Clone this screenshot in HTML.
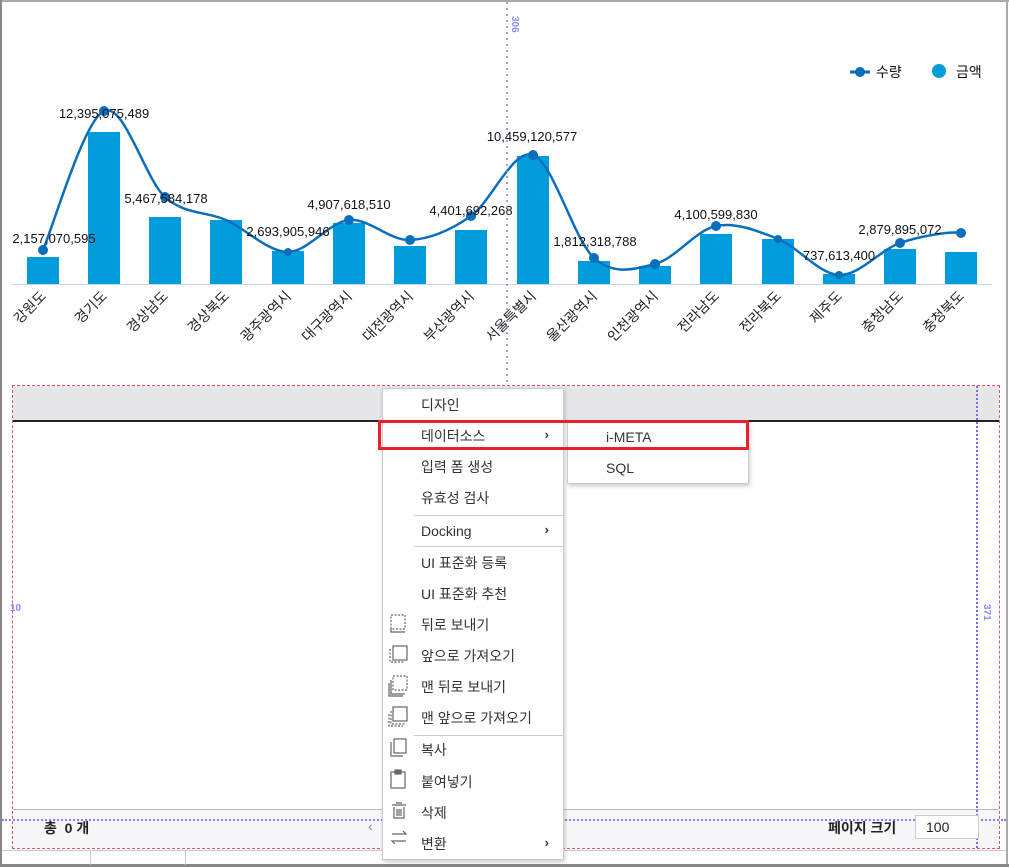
<!DOCTYPE html>
<html><head><meta charset="utf-8"><style>
*{margin:0;padding:0;box-sizing:border-box}
body{width:1009px;height:867px;background:#fff;position:relative;overflow:hidden;font-family:"Liberation Sans","Noto Sans CJK KR",sans-serif;color:#222}
.abs{position:absolute}
.menu{position:absolute;left:382px;top:388px;width:182px;height:472px;background:#fff;border:1px solid #ccc;box-shadow:1px 2px 4px rgba(0,0,0,.2)}
.mi{position:absolute;left:38px;font-size:14px;color:#333;line-height:18px}
.sep{position:absolute;left:31px;right:0;height:1px;background:#ccc}
.arr{position:absolute;right:14px;font-size:13px;font-weight:bold;color:#333}
</style></head><body>
<div class="abs" style="left:0;top:0;width:1009px;height:2px;background:#aaa"></div>
<div class="abs" style="left:0;top:0;width:2px;height:867px;background:#888"></div>
<div class="abs" style="left:1006px;top:0;width:2px;height:867px;background:#aaa"></div>
<div class="abs" style="left:0;top:864px;width:1009px;height:3px;background:#888"></div>

<svg class="abs" style="left:0;top:0" width="1009" height="384">
<g fill="#009cdc">
<rect x="27" y="257" width="32" height="27"/><rect x="88" y="132" width="32" height="152"/>
<rect x="149" y="217" width="32" height="67"/><rect x="210" y="220" width="32" height="64"/>
<rect x="272" y="251" width="32" height="33"/><rect x="333" y="223" width="32" height="61"/>
<rect x="394" y="246" width="32" height="38"/><rect x="455" y="230" width="32" height="54"/>
<rect x="517" y="156" width="32" height="128"/><rect x="578" y="261" width="32" height="23"/>
<rect x="639" y="266" width="32" height="18"/><rect x="700" y="234" width="32" height="50"/>
<rect x="762" y="239" width="32" height="45"/><rect x="823" y="274" width="32" height="10"/>
<rect x="884" y="249" width="32" height="35"/><rect x="945" y="252" width="32" height="32"/>
</g>
<line x1="12" y1="284.5" x2="992" y2="284.5" stroke="#c8d4ea" stroke-width="1"/>
<path d="M43,250 C53,227 84,120 104,111 C124,102 145,179 165,197 C185,215 206,211 226,220 C246,229 268,252 288,252 C308,252 329,222 349,220 C369,218 390,241 410,240 C430,239 451,230 471,216 C491,202 513,148 533,155 C553,162 574,240 594,258 C614,276 635,269 655,264 C675,259 696,230 716,226 C736,222 758,231 778,239 C798,247 819,274 839,275 C859,276 880,250 900,243 C920,236 951,231 961,233" fill="none" stroke="#0a6ebd" stroke-width="2.5"/>
<g fill="#0a6ebd">
<circle cx="43" cy="250" r="5"/><circle cx="104" cy="111" r="5"/><circle cx="165" cy="197" r="5"/><circle cx="288" cy="252" r="4"/><circle cx="349" cy="220" r="5"/><circle cx="410" cy="240" r="5"/><circle cx="471" cy="216" r="5"/><circle cx="533" cy="155" r="5"/><circle cx="594" cy="258" r="5"/><circle cx="655" cy="264" r="5"/><circle cx="716" cy="226" r="5"/><circle cx="778" cy="239" r="4"/><circle cx="839" cy="275" r="4"/><circle cx="900" cy="243" r="5"/><circle cx="961" cy="233" r="5"/>
</g>
<g font-family="Liberation Sans,Noto Sans CJK KR,sans-serif" font-size="13" fill="#111" text-anchor="middle">
<text x="54" y="243">2,157,070,595</text><text x="104" y="118">12,395,075,489</text>
<text x="166" y="203">5,467,584,178</text><text x="288" y="236">2,693,905,946</text>
<text x="349" y="209">4,907,618,510</text><text x="471" y="215">4,401,692,268</text>
<text x="532" y="141">10,459,120,577</text><text x="595" y="246">1,812,318,788</text>
<text x="716" y="219">4,100,599,830</text><text x="839" y="260">737,613,400</text>
<text x="900" y="234">2,879,895,072</text>
</g>
<g font-family="Liberation Sans,Noto Sans CJK KR,sans-serif" font-size="14" fill="#222" text-anchor="end">
<text transform="translate(47,297) rotate(-45)">강원도</text>
<text transform="translate(108,297) rotate(-45)">경기도</text>
<text transform="translate(169,297) rotate(-45)">경상남도</text>
<text transform="translate(230,297) rotate(-45)">경상북도</text>
<text transform="translate(292,297) rotate(-45)">광주광역시</text>
<text transform="translate(353,297) rotate(-45)">대구광역시</text>
<text transform="translate(414,297) rotate(-45)">대전광역시</text>
<text transform="translate(475,297) rotate(-45)">부산광역시</text>
<text transform="translate(537,297) rotate(-45)">서울특별시</text>
<text transform="translate(598,297) rotate(-45)">울산광역시</text>
<text transform="translate(659,297) rotate(-45)">인천광역시</text>
<text transform="translate(720,297) rotate(-45)">전라남도</text>
<text transform="translate(782,297) rotate(-45)">전라북도</text>
<text transform="translate(843,297) rotate(-45)">제주도</text>
<text transform="translate(904,297) rotate(-45)">충청남도</text>
<text transform="translate(965,297) rotate(-45)">충청북도</text>
</g>
<line x1="850" y1="72" x2="870" y2="72" stroke="#0a6ebd" stroke-width="3"/><circle cx="860" cy="72" r="5" fill="#0a6ebd"/>
<text x="876" y="77" font-size="14" fill="#111" font-family="Liberation Sans,Noto Sans CJK KR,sans-serif">수량</text>
<circle cx="939" cy="71" r="7" fill="#009cdc"/>
<text x="956" y="77" font-size="14" fill="#111" font-family="Liberation Sans,Noto Sans CJK KR,sans-serif">금액</text>
<line x1="507" y1="2" x2="507" y2="384" stroke="#7b7bf5" stroke-width="1.5" stroke-dasharray="2,4"/>
<text transform="translate(512,16) rotate(90)" font-size="10" font-weight="bold" fill="#8a8af5" font-family="Liberation Sans,sans-serif">306</text>
</svg>

<div class="abs" style="left:13px;top:386px;width:986px;height:35px;background:#e6e5ea"></div>
<div class="abs" style="left:13px;top:420px;width:986px;height:2px;background:#222"></div>
<div class="abs" style="left:13px;top:809px;width:986px;height:39px;background:#f7f7fa;border-top:1px solid #bbb"></div>
<div class="abs" style="left:12px;top:385px;width:988px;height:464px;border:1px dashed #e8545a"></div>
<div class="abs" style="left:976px;top:386px;width:0;height:462px;border-left:2px dotted #6f6ff5"></div>
<div class="abs" style="left:2px;top:819px;width:1004px;height:0;border-top:2px dotted #8080f5"></div>
<div class="abs" style="left:10px;top:603px;font-size:10px;font-weight:bold;color:#8a8af5">10</div>
<div class="abs" style="top:604px;font-size:10px;font-weight:bold;color:#8a8af5;transform:rotate(90deg);transform-origin:left top;left:992px">371</div>
<div class="abs" style="left:44px;top:818px;font-size:14px;font-weight:bold;color:#222">총 &nbsp;0 개</div>
<div class="abs" style="left:368px;top:818px;font-size:14px;color:#888">‹</div>
<div class="abs" style="left:828px;top:818px;font-size:14px;font-weight:bold;color:#222">페이지 크기</div>
<div class="abs" style="left:915px;top:815px;width:64px;height:24px;border:1px solid #ccc;background:#fff;font-size:14px;padding:3px 0 0 10px">100</div>
<div class="abs" style="left:2px;top:850px;width:1004px;height:1px;background:#ccc"></div>
<div class="abs" style="left:90px;top:850px;width:1px;height:15px;background:#ccc"></div>
<div class="abs" style="left:185px;top:850px;width:1px;height:15px;background:#ccc"></div>

<div class="menu">
<div class="mi" style="top:7px">디자인</div>
<div class="mi" style="top:38px">데이터소스</div><div class="arr" style="top:38px">›</div>
<div class="mi" style="top:69px">입력 폼 생성</div>
<div class="mi" style="top:100px">유효성 검사</div>
<div class="sep" style="top:126px"></div>
<div class="mi" style="top:133px">Docking</div><div class="arr" style="top:133px">›</div>
<div class="sep" style="top:157px"></div>
<div class="mi" style="top:165px">UI 표준화 등록</div>
<div class="mi" style="top:196px">UI 표준화 추천</div>
<div class="mi" style="top:227px">뒤로 보내기</div>
<div class="mi" style="top:258px">앞으로 가져오기</div>
<div class="mi" style="top:289px">맨 뒤로 보내기</div>
<div class="mi" style="top:320px">맨 앞으로 가져오기</div>
<div class="sep" style="top:346px"></div>
<div class="mi" style="top:352px">복사</div>
<div class="mi" style="top:384px">붙여넣기</div>
<div class="mi" style="top:415px">삭제</div>
<div class="mi" style="top:446px">변환</div><div class="arr" style="top:446px">›</div>
<svg class="abs" style="left:5px;top:224px" width="24" height="240" fill="none" stroke="#666" stroke-width="1.2">
<rect x="3" y="2" width="14" height="14" stroke-dasharray="2,1.5"/><path d="M3,16 v3 h14"/>
<rect x="5" y="33" width="14" height="14"/><path d="M2,36 v13 h14" stroke-dasharray="2,1.5"/>
<rect x="5" y="63" width="14" height="14" stroke-dasharray="2,1.5"/><path d="M3,67 v14 h14"/><path d="M1,70 v13 h14"/>
<rect x="5" y="94" width="14" height="14"/><path d="M3,98 v13 h14" stroke-dasharray="2,1.5"/><path d="M1,101 v12 h14" stroke-dasharray="2,1.5"/>
<rect x="6" y="126" width="12" height="14"/><path d="M3,129 v14 h12"/>
<rect x="3" y="159" width="14" height="16"/><rect x="7" y="157" width="6" height="4" fill="#666"/>
<path d="M4,192 h14 M6,194 v11 h10 v-11 M9,196 v7 M11,196 v7 M13,196 v7 M8,190 h6"/>
<path d="M4,221 h14 l-3,-3 M18,228 h-14 l3,3"/>
</svg>
</div>
<div class="abs" style="left:567px;top:421px;width:182px;height:63px;background:#fff;border:1px solid #ccc;box-shadow:1px 2px 4px rgba(0,0,0,.2)">
<div class="mi" style="top:6px">i-META</div>
<div class="mi" style="top:37px">SQL</div>
</div>
<div class="abs" style="left:378px;top:420px;width:371px;height:30px;border:3px solid #e8202a"></div>
</body></html>
